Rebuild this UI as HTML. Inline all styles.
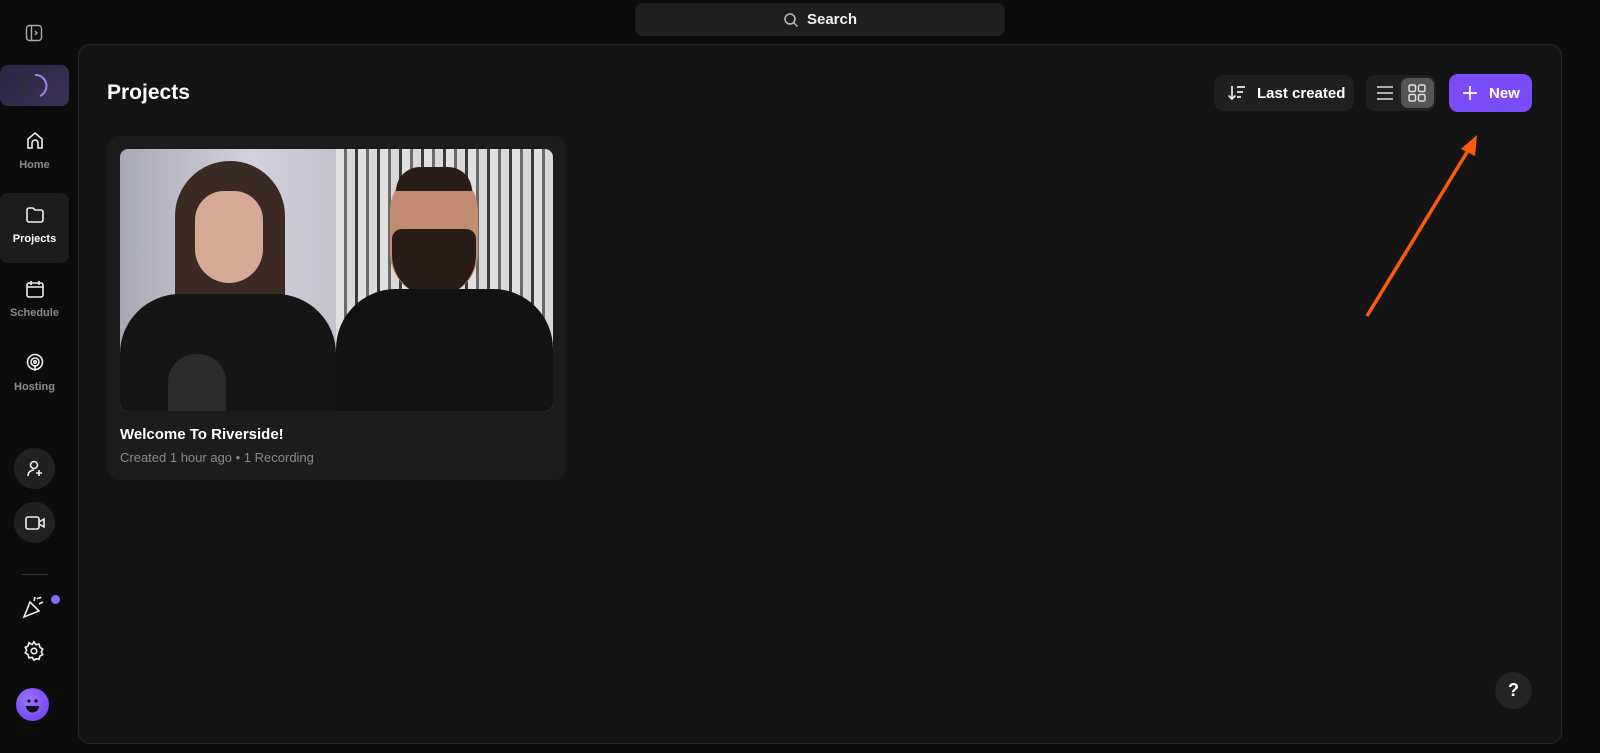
<!DOCTYPE html>
<html><head><style>
*{margin:0;padding:0;box-sizing:border-box}
body{width:1600px;height:753px;background:#0c0c0c;font-family:"Liberation Sans",sans-serif;position:relative;overflow:hidden;color:#fff}
.a{position:absolute}
.nav{position:absolute;left:0;width:69px;text-align:center;font-size:11px;font-weight:bold;color:#8a8a8a}
.nav svg{display:block;margin:0 auto 8px}
</style></head><body>
<div class="a" style="left:635px;top:3px;width:370px;height:33px;background:#1f1f1f;border-radius:8px;font-size:15px;font-weight:bold;color:#eee;display:flex;align-items:center;justify-content:center;gap:8px">
<svg width="16" height="16" viewBox="0 0 16 16" fill="none" stroke="#bbb" stroke-width="1.5"><circle cx="7" cy="7" r="5"/><path d="M11 11l3.5 3.5"/></svg>Search</div>

<svg class="a" style="left:25px;top:24px" width="18" height="18" viewBox="0 0 18 18" fill="none" stroke="#aaa" stroke-width="1.4"><rect x="1.5" y="1.5" width="15" height="15" rx="3"/><path d="M6.5 1.5v15M10 7l2 2-2 2"/></svg>
<div class="a" style="left:0;top:65px;width:69px;height:41px;border-radius:8px;background:linear-gradient(135deg,#2b2740,#3a3157)"></div>
<svg class="a" style="left:22px;top:73px" width="26" height="26" viewBox="0 0 26 26" fill="none" stroke-width="2"><circle cx="13" cy="13" r="11" stroke="#333"/><path d="M13 2a11 11 0 0 1 5 21" stroke="#9b80ff"/></svg>

<div class="nav" style="top:131px"><svg width="20" height="20" viewBox="0 0 20 20" fill="none" stroke="#eee" stroke-width="1.6"><path d="M3 17V8l7-6 7 6v9h-4v-5a3 3 0 0 0-6 0v5z"/></svg>Home</div>
<div class="a" style="left:0;top:193px;width:69px;height:70px;border-radius:8px;background:#1c1c1c"></div>
<div class="nav" style="top:205px;color:#fff"><svg width="20" height="20" viewBox="0 0 20 20" fill="none" stroke="#eee" stroke-width="1.6"><path d="M2 5a2 2 0 0 1 2-2h4l2 2h6a2 2 0 0 1 2 2v8a2 2 0 0 1-2 2H4a2 2 0 0 1-2-2z"/></svg>Projects</div>
<div class="nav" style="top:279px"><svg width="20" height="20" viewBox="0 0 20 20" fill="none" stroke="#eee" stroke-width="1.6"><rect x="2" y="4" width="16" height="14" rx="2"/><path d="M2 8h16M6 2v4M14 2v4"/></svg>Schedule</div>
<div class="nav" style="top:353px"><svg width="20" height="20" viewBox="0 0 20 20" fill="none" stroke="#eee" stroke-width="1.6"><circle cx="10" cy="9" r="7.5"/><circle cx="10" cy="9" r="4"/><circle cx="10" cy="9" r="1.3"/><path d="M10 12v6"/></svg>Hosting</div>

<div class="a" style="left:14px;top:448px;width:41px;height:41px;border-radius:50%;background:#212121"></div>
<svg class="a" style="left:25px;top:459px" width="20" height="20" viewBox="0 0 20 20" fill="none" stroke="#eee" stroke-width="1.6"><circle cx="9" cy="6" r="3.5"/><path d="M3 17c0-4 3-6 6-6M14 11v6M11 14h6"/></svg>
<div class="a" style="left:14px;top:502px;width:41px;height:41px;border-radius:50%;background:#212121"></div>
<svg class="a" style="left:24px;top:513px" width="22" height="20" viewBox="0 0 22 20" fill="none" stroke="#eee" stroke-width="1.6"><rect x="2" y="4" width="13" height="12" rx="2"/><path d="M15 9l5-3v8l-5-3"/></svg>
<div class="a" style="left:22px;top:574px;width:26px;height:1px;background:#333"></div>
<svg class="a" style="left:22px;top:593px" width="26" height="26" viewBox="0 0 26 26" fill="none" stroke="#eee" stroke-width="1.6"><path d="M2 24l6-15 9 9z"/><path d="M12 8l1-4M17 11l4-2M15 6c1-2 3 0 4-2"/></svg>
<div class="a" style="left:51px;top:595px;width:9px;height:9px;border-radius:50%;background:#8b6cf5"></div>
<svg class="a" style="left:23px;top:640px" width="22" height="22" viewBox="0 0 24 24" fill="none" stroke="#eee" stroke-width="1.8"><circle cx="12" cy="12" r="3"/><path d="M12 2l2 3 3.5-.5 1 3.5 3 2-1.5 3 1.5 3-3 1.5-1 3.5-3.5-.5L12 22l-2-3-3.5.5-1-3.5-3-2L4 11 2.5 8l3-1.5 1-3.5L10 5z"/></svg>
<div class="a" style="left:16px;top:688px;width:33px;height:33px;border-radius:50%;background:radial-gradient(circle at 40% 35%,#9a70ff,#6a3cf0)"></div>
<svg class="a" style="left:16px;top:688px" width="33" height="33" viewBox="0 0 33 33"><circle cx="13" cy="13" r="1.6" fill="#111"/><circle cx="20" cy="13" r="1.6" fill="#111"/><path d="M10 18h13a6.5 6.5 0 0 1-13 0z" fill="#111"/></svg>

<div class="a" style="left:78px;top:44px;width:1484px;height:700px;background:#141414;border:1px solid #262626;border-radius:12px"></div>
<div class="a" style="left:107px;top:81px;font-size:21px;font-weight:bold">Projects</div>

<div class="a" style="left:1214px;top:75px;width:140px;height:36px;background:#202020;border-radius:10px;font-size:15px;font-weight:bold;display:flex;align-items:center;padding-left:13px;gap:10px">
<svg width="20" height="18" viewBox="0 0 20 18" fill="none" stroke="#eee" stroke-width="1.7"><path d="M5 2v13M1.5 11.5L5 15l3.5-3.5M10 3h8M10 8h6M10 13h4"/></svg>Last created</div>
<div class="a" style="left:1366px;top:75px;width:70px;height:36px;background:#202020;border-radius:9px"></div>
<svg class="a" style="left:1376px;top:85px" width="18" height="16" viewBox="0 0 18 16" stroke="#ddd" stroke-width="1.6"><path d="M1 2h16M1 8h16M1 14h16"/></svg>
<div class="a" style="left:1401px;top:78px;width:33px;height:30px;background:#555;border-radius:7px"></div>
<svg class="a" style="left:1408px;top:84px" width="18" height="18" viewBox="0 0 18 18" fill="none" stroke="#ddd" stroke-width="1.5"><rect x="1" y="1" width="6.5" height="6.5" rx="1.5"/><rect x="10.5" y="1" width="6.5" height="6.5" rx="1.5"/><rect x="1" y="10.5" width="6.5" height="6.5" rx="1.5"/><rect x="10.5" y="10.5" width="6.5" height="6.5" rx="1.5"/></svg>
<div class="a" style="left:1449px;top:74px;width:83px;height:38px;background:#7a4cf7;border-radius:9px;font-size:15px;font-weight:bold;display:flex;align-items:center;padding-left:13px;gap:11px">
<svg width="16" height="16" viewBox="0 0 16 16" stroke="#fff" stroke-width="1.7"><path d="M8 1v14M1 8h14"/></svg>New</div>

<svg class="a" style="left:1360px;top:125px" width="130" height="200" viewBox="0 0 130 200"><path d="M7 191L112 19" stroke="#ff5a0a" stroke-width="3.5"/><path d="M117 10l-16 14 14 7z" fill="#ff5a0a"/></svg>

<div class="a" style="left:107px;top:136px;width:459px;height:344px;background:#1c1c1c;border-radius:12px"></div>
<div class="a" style="left:120px;top:149px;width:433px;height:262px;border-radius:8px;overflow:hidden">
 <div class="a" style="left:0;top:0;width:216px;height:262px;background:linear-gradient(90deg,#a9a8b5,#d2d0dd 60%,#c4c3cc)"></div>
 <div class="a" style="left:55px;top:12px;width:110px;height:250px;border-radius:55px 55px 10px 10px;background:#3a2a22"></div>
 <div class="a" style="left:75px;top:42px;width:68px;height:92px;border-radius:34px 34px 40px 40px;background:#d6a996"></div>
 <div class="a" style="left:0;top:145px;width:216px;height:117px;border-radius:60px 60px 0 0;background:#151515"></div>
 <div class="a" style="left:48px;top:205px;width:58px;height:57px;border-radius:28px 28px 0 0;background:#2b2b2b"></div>
 <div class="a" style="left:216px;top:0;width:217px;height:262px;background:repeating-linear-gradient(90deg,#e0e0e0 0 8px,#6a6a6a 8px 11px,#d8d8d8 11px 19px,#3a3a3a 19px 22px)"></div>
 <div class="a" style="left:270px;top:18px;width:88px;height:130px;border-radius:44px 44px 44px 44px;background:#c28b72"></div>
 <div class="a" style="left:276px;top:18px;width:76px;height:24px;border-radius:38px 38px 0 0;background:#2a1d18"></div>
 <div class="a" style="left:272px;top:80px;width:84px;height:68px;border-radius:10px 10px 42px 42px;background:#2a1d18"></div>
 <div class="a" style="left:216px;top:140px;width:217px;height:122px;border-radius:60px 60px 0 0;background:#121212"></div>
</div>
<div class="a" style="left:120px;top:426px;font-size:15px;font-weight:bold">Welcome To Riverside!</div>
<div class="a" style="left:120px;top:450px;font-size:13px;color:#8a8a8a">Created 1 hour ago • 1 Recording</div>

<div class="a" style="left:1495px;top:672px;width:37px;height:37px;border-radius:50%;background:#242424;font-size:18px;font-weight:bold;display:flex;align-items:center;justify-content:center">?</div>
</body></html>
